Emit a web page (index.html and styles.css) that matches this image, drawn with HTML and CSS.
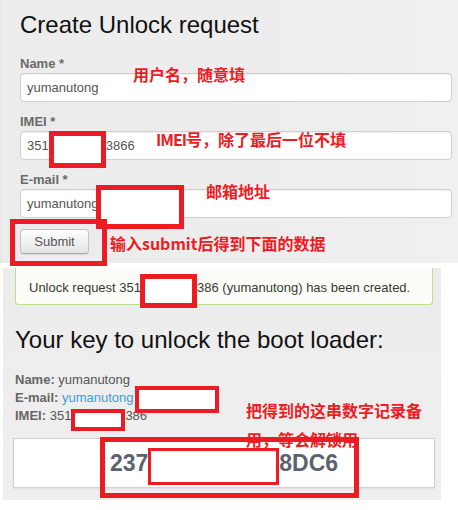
FILE: index.html
```html
<!DOCTYPE html>
<html lang="en">

<head>
    <meta charset="UTF-8">
    <meta name="viewport" content="width=device-width, initial-scale=1.0">
    <title>Create Unlock request</title>
    <link rel="stylesheet" href="styles.css">
</head>

<body>

    <div class="request-panel">
        <h1>Create Unlock request</h1>

        <div class="field first">
            <label>Name *</label>
            <div class="input-box">yumanutong</div>
        </div>
        <div class="field">
            <label>IMEI *</label>
            <div class="input-box">351<span class="gap imei-gap"></span>3866</div>
        </div>
        <div class="field">
            <label>E-mail *</label>
            <div class="input-box">yumanutong<span class="gap mail-gap"></span></div>
        </div>

        <div class="submit-wrap">
            <button>Submit</button>
            <span class="mark submit-mark"></span>
        </div>

        <span class="note note-name">用户名，随意填</span>
        <span class="note note-imei"><span class="latin">IMEI</span>号，除了最后一位不填</span>
        <span class="note note-mail">邮箱地址</span>
        <span class="note note-submit">输入submit后得到下面的数据</span>
    </div>

    <div class="result-panel">
        <div class="alert">Unlock request 351<span class="gap alert-gap"></span>386 (yumanutong) has been created.</div>

        <h2>Your key to unlock the boot loader:</h2>

        <div class="info">
            <p><strong>Name:</strong> yumanutong</p>
            <p><strong>E-mail:</strong> <a>yumanutong</a><span class="gap info-mail-gap"></span></p>
            <p><strong>IMEI:</strong> 351<span class="gap info-imei-gap"></span>386</p>
        </div>

        <div class="key-box">
            237<span class="gap key-gap"></span>8DC6
            <span class="mark key-mark"></span>
        </div>

        <span class="note note-key">把得到的这串数字记录备用，等会解锁用</span>
    </div>

</body>

</html>
```

FILE: styles.css
```css
* {
    padding: 0;
    margin: 0;
    box-sizing: border-box;
}

body {
    background-color: #fff;
    font-family: 'Liberation Sans', Arial, sans-serif;
    font-size: 13px;
    width: 458px;
}

/* ===== top screenshot: the form ===== */

.request-panel {
    position: relative;
    height: 263px;
    padding: 11px 6px 0 20px;
    background: linear-gradient(90deg, #e6e6e6 0, #ececec 3px, #ededed 60%, #f0f0f0 100%);
}

h1,
h2 {
    font-size: 24px;
    font-weight: normal;
    line-height: 28px;
    color: #111;
}

.field {
    margin-top: 12px;
}

.field.first {
    margin-top: 17px;
}

label {
    display: block;
    font-weight: bold;
    line-height: 16px;
    color: #6a6a6a;
    margin-bottom: 1px;
}

.input-box {
    height: 29px;
    line-height: 27px;
    padding: 0 6px;
    border: 1px solid #cfcfcf;
    border-radius: 4px;
    background: #fff;
    color: #555;
    box-shadow: inset 0 1px 1px rgba(0, 0, 0, 0.06);
    white-space: nowrap;
}

.submit-wrap {
    position: relative;
    margin-top: 11px;
    width: 69px;
}

button {
    display: block;
    font-family: inherit;
    font-size: 13px;
    color: #555;
    width: 69px;
    height: 25px;
    border: 1px solid #c2c2c2;
    border-bottom-color: #a8a8a8;
    border-radius: 4px;
    background: linear-gradient(#ffffff, #e4e4e4);
    box-shadow: 0 1px 1px rgba(0, 0, 0, 0.08);
}

/* ===== red marks drawn on the screenshot ===== */

.gap {
    display: inline-block;
    position: relative;
    height: 0;
}

.gap::after {
    content: '';
    position: absolute;
    left: 0;
    right: 0;
    background: #fff;
    border: 5px solid #ed1c24;
}

.imei-gap {
    width: 57px;
}

.imei-gap::after {
    top: -19px;
    height: 27px;
}

.mail-gap {
    width: 88px;
    margin-left: -3px;
}

.mail-gap::after {
    top: -23px;
    height: 34px;
}

.alert-gap {
    width: 57px;
    margin-left: -1px;
}

.alert-gap::after {
    top: -18px;
    height: 24px;
}

.info-mail-gap {
    width: 84px;
    margin-left: 1px;
}

.info-mail-gap::after {
    top: -16px;
    height: 19px;
    border-width: 4px;
}

.info-imei-gap {
    width: 54px;
}

.info-imei-gap::after {
    top: -11px;
    height: 14px;
    border-width: 4px;
}

.key-gap {
    width: 131px;
}

.key-gap::after {
    top: -23px;
    height: 31px;
    border-width: 3px;
}

.mark {
    position: absolute;
    border: 5px solid #ed1c24;
}

.submit-mark {
    left: -10px;
    top: -10px;
    width: 97px;
    height: 47px;
}

.key-mark {
    left: 86px;
    top: -2px;
    width: 259px;
    height: 61px;
}

.note {
    position: absolute;
    font-family: 'Noto Sans CJK SC', sans-serif;
    font-size: 16px;
    font-weight: bold;
    line-height: 16px;
    color: #ed1c24;
    white-space: nowrap;
}

.note .latin {
    letter-spacing: -1px;
}

.note-name {
    left: 133px;
    top: 66px;
}

.note-imei {
    left: 156px;
    top: 131px;
}

.note-mail {
    left: 206px;
    top: 183px;
}

.note-submit {
    left: 110px;
    top: 235px;
}

.note-key {
    left: 243px;
    top: 128px;
    width: 180px;
    line-height: 29px;
    white-space: normal;
}

/* ===== bottom screenshot: the result ===== */

.result-panel {
    position: relative;
    width: 438px;
    height: 232px;
    margin: 5px 0 0 3px;
    padding: 0 8px 0 12px;
    background: linear-gradient(#ececec, #efefef);
}

.alert {
    height: 37px;
    padding: 11px 0 0 13px;
    line-height: 18px;
    color: #363a30;
    background: #fcfdf9;
    border: 1px solid #b9e28d;
    border-top: none;
    border-radius: 0 0 4px 4px;
    white-space: nowrap;
}

h2 {
    margin-top: 21px;
}

.info {
    margin-top: 17px;
    line-height: 18px;
    color: #555;
}

.info strong {
    color: #666;
}

.info a {
    color: #3aa0d8;
}

.key-box {
    position: relative;
    height: 50px;
    margin: 13px -2px 0 -2px;
    background: #fff;
    border: 1px solid #d2d2d2;
    box-shadow: 0 1px 2px rgba(0, 0, 0, 0.08);
    text-align: center;
    font-size: 23px;
    font-weight: bold;
    line-height: 48px;
    color: #5c6272;
}
```
